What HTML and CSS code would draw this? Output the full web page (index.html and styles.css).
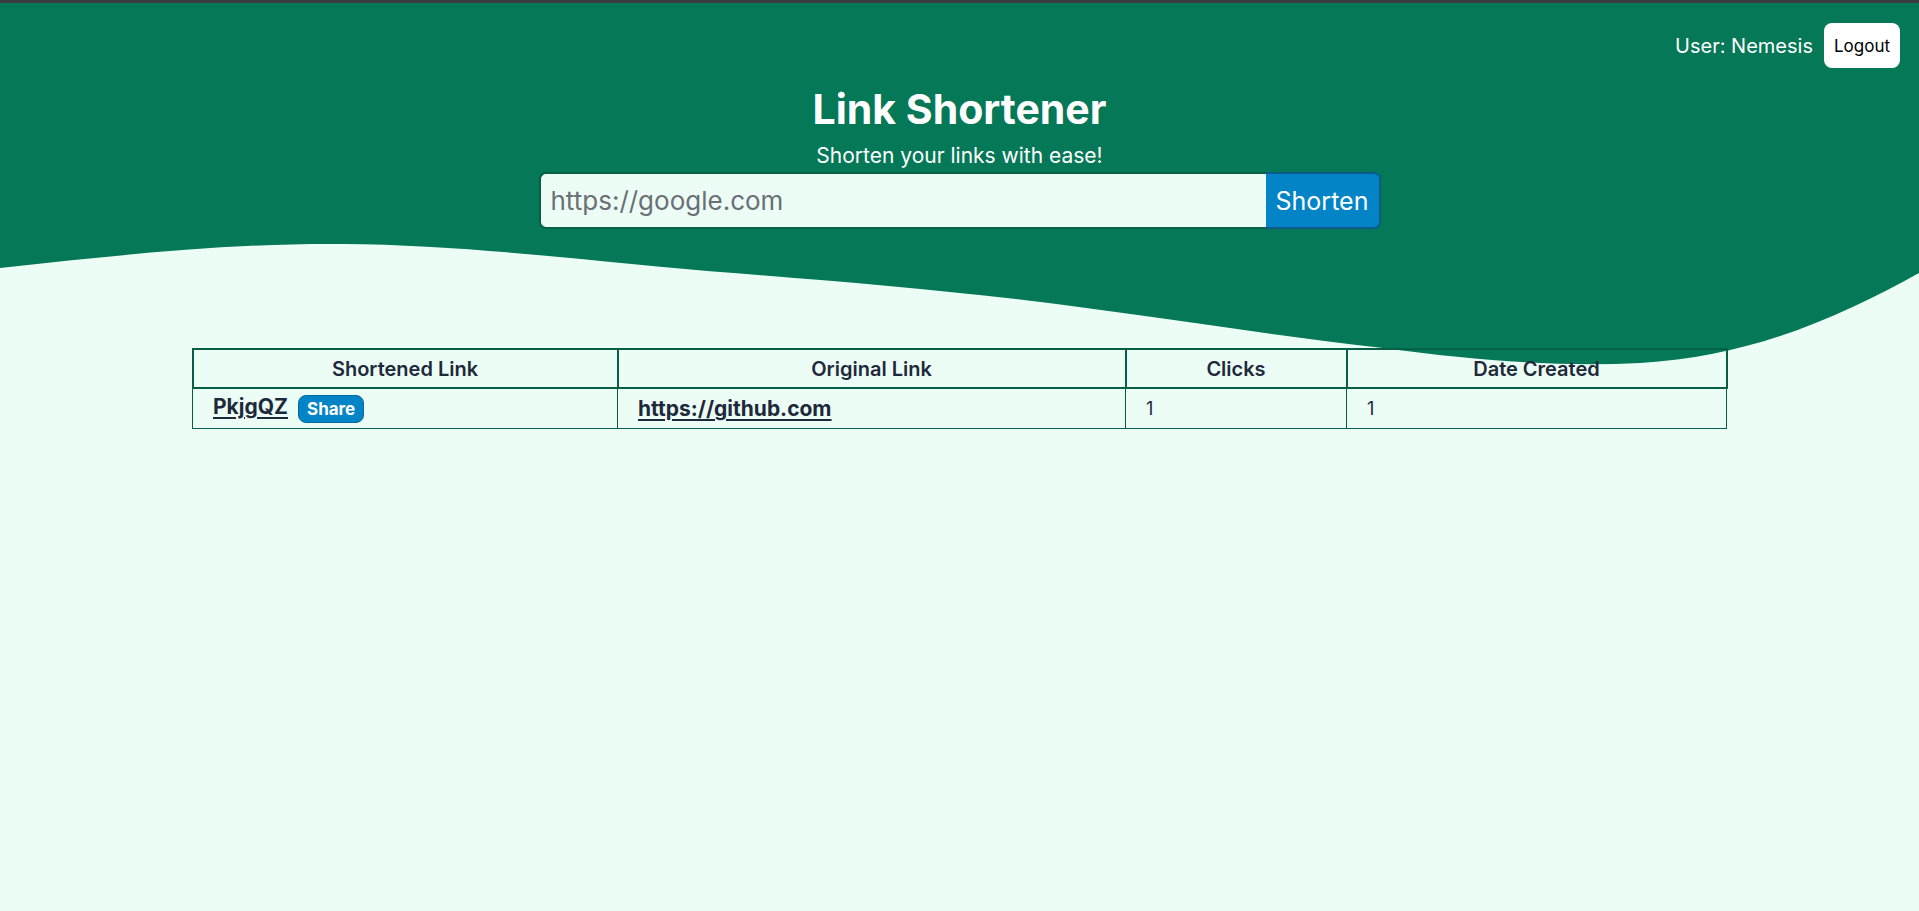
FILE: index.html
```html
<!DOCTYPE html>
<html lang="en">
<head>
<meta charset="utf-8">
<title>Link Shortener</title>
<link rel="stylesheet" href="styles.css">
</head>
<body>
<svg class="wave" viewBox="0 0 1919 370" preserveAspectRatio="none" aria-hidden="true">
  <path d="M0,0 H1919 V270 C1840,314 1750,354 1640,360 C1560,364 1480,358 1383,345 C1290,335 1200,320 1101,307 C980,290 860,280 734,270 C620,262 480,242 343,241 C230,240 120,252 0,265 Z" fill="#047857"/>
</svg>
<header class="hero">
  <div class="topbar">
    <span class="user">User: Nemesis</span>
    <button class="logout" type="button">Logout</button>
  </div>
  <h1 class="title">Link Shortener</h1>
  <p class="tagline">Shorten your links with ease!</p>
  <form class="shorten-form">
    <input class="url-input" type="text" placeholder="https://google.com">
    <button class="shorten-btn" type="button">Shorten</button>
  </form>
</header>
<main class="content">
  <table class="links">
    <colgroup>
      <col class="c1"><col class="c2"><col class="c3"><col class="c4">
    </colgroup>
    <thead>
      <tr>
        <th>Shortened Link</th>
        <th>Original Link</th>
        <th>Clicks</th>
        <th>Date Created</th>
      </tr>
    </thead>
    <tbody>
      <tr>
        <td><a href="#" class="link">PkjgQZ</a><button class="share" type="button">Share</button></td>
        <td><a href="#" class="link">https://github.com</a></td>
        <td>1</td>
        <td>1</td>
      </tr>
    </tbody>
  </table>
</main>
</body>
</html>
```
FILE: styles.css
```css
html, body {
  margin: 0;
  padding: 0;
}
body {
  position: relative;
  min-height: 908px;
  background: #ecfdf5;
  border-top: 3px solid #3a3b40;
  font-family: Inter, "Noto Sans", sans-serif;
  color: #1e293b;
}
.wave {
  position: absolute;
  top: 0;
  left: 0;
  width: 100%;
  height: 370px;
  z-index: 0;
  display: block;
}
.hero {
  position: relative;
  z-index: 1;
}
.topbar {
  display: flex;
  justify-content: flex-end;
  align-items: center;
  gap: 11px;
  padding: 20px 19px 0 0;
}
.user {
  color: #ffffff;
  font-size: 20px;
}
.logout {
  height: 45px;
  padding: 0 10px;
  border: none;
  border-radius: 8px;
  background: #ffffff;
  color: #000000;
  font-family: inherit;
  font-size: 17px;
}
.title {
  margin: 16px 0 0;
  text-align: center;
  color: #ffffff;
  font-size: 41px;
  line-height: 50px;
  font-weight: 700;
}
.tagline {
  margin: 9px 0 0;
  text-align: center;
  color: #ffffff;
  font-size: 21px;
  line-height: 26px;
}
.shorten-form {
  display: flex;
  width: 842px;
  height: 57px;
  margin: 3px auto 0;
}
.url-input {
  flex: 1;
  min-width: 0;
  box-sizing: border-box;
  height: 100%;
  margin: 0;
  padding: 0 10px;
  border: 2px solid #065f46;
  border-right: none;
  border-radius: 7px 0 0 7px;
  background: #ecfdf5;
  font-family: inherit;
  font-size: 26px;
  color: #1e293b;
  outline: none;
}
.url-input::placeholder {
  color: #6b6f76;
}
.shorten-btn {
  box-sizing: border-box;
  width: 115px;
  height: 100%;
  margin: 0;
  padding: 0;
  border: 2px solid #0f5a8c;
  border-left: none;
  border-radius: 0 7px 7px 0;
  background: #0284c7;
  color: #ffffff;
  font-family: inherit;
  font-size: 25px;
}
.content {
  position: relative;
  z-index: 1;
  padding-top: 119px;
}
.links {
  width: 1534px;
  margin: 0 auto;
  border-collapse: collapse;
  table-layout: fixed;
}
.c1 { width: 425px; }
.c2 { width: 508px; }
.c3 { width: 221px; }
.c4 { width: 380px; }
.links th {
  height: 37px;
  padding: 0;
  border: 2px solid #065f46;
  font-size: 20px;
  font-weight: 600;
  text-align: center;
  color: #1e293b;
}
.links td {
  height: 39px;
  padding: 0 20px;
  border: 1px solid #065f46;
  font-size: 18px;
  text-align: left;
  color: #1e293b;
}
.link {
  color: #1e293b;
  font-size: 21px;
  font-weight: 700;
  text-decoration: underline;
  text-decoration-thickness: 2px;
  text-underline-offset: 3px;
}
.share {
  margin-left: 10px;
  height: 28px;
  padding: 0 8px;
  border: 1px solid #0369a1;
  border-radius: 8px;
  background: #0284c7;
  color: #ffffff;
  font-family: inherit;
  font-size: 17px;
  font-weight: 700;
  vertical-align: middle;
}
```
